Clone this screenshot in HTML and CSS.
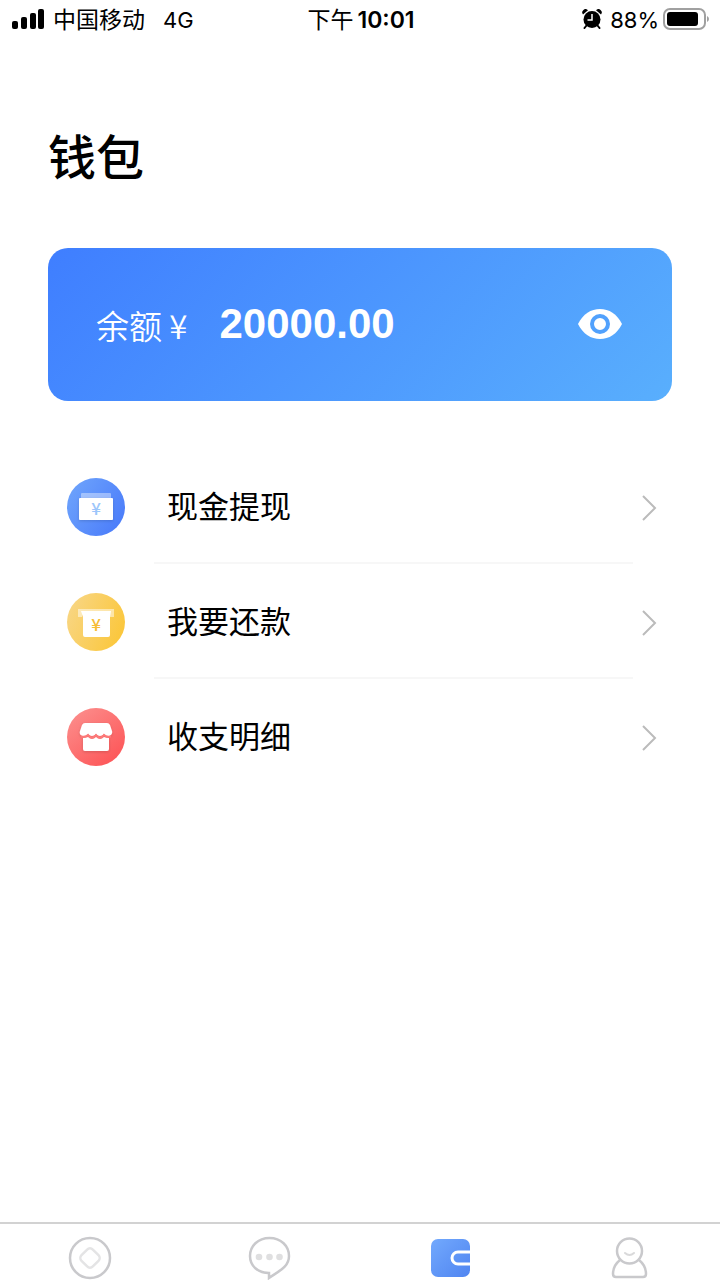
FILE: index.html
```
<!DOCTYPE html>
<html lang="zh-CN">
<head>
    <meta charset="UTF-8">
    <meta name="viewport" content="width=device-width, initial-scale=1.0">
    <title>钱包</title>
    <link rel="stylesheet" href="styles.css">
</head>
<body>
    <!-- Status bar -->
    <header class="status-bar">
        <div class="status-left">
            <svg class="signal" width="33" height="20" viewBox="0 0 33 20" aria-hidden="true">
                <rect x="0" y="12" width="6" height="8" rx="2"/>
                <rect x="9" y="8" width="6" height="12" rx="2"/>
                <rect x="18" y="4" width="6" height="16" rx="2"/>
                <rect x="26" y="0" width="6" height="20" rx="2"/>
            </svg>
            <span class="carrier">中国移动</span>
            <span class="network">4G</span>
        </div>
        <div class="status-time">下午<b>10:01</b></div>
        <div class="status-right">
            <svg width="20" height="20" viewBox="0 0 20 20" aria-hidden="true">
                <path d="M1 5.500A3.300 3.300 0 0 1 6 1.200zM19 5.500A3.300 3.300 0 0 0 14 1.200z"/>
                <circle cx="10" cy="10.500" r="8.500"/>
                <path d="M4.500 16.500L2.500 19M15.500 16.500L17.500 19" stroke="#000" stroke-width="2" stroke-linecap="round"/>
                <path d="M10 5v6H5.500" fill="none" stroke="#fff" stroke-width="1.500"/>
            </svg>
            <span class="percent">88%</span>
            <svg width="47" height="22" viewBox="0 0 47 22" aria-hidden="true">
                <rect x="1" y="1" width="41" height="20" rx="6" fill="none" stroke="#a0a0a0" stroke-width="2"/>
                <rect x="4" y="4" width="31" height="14" rx="3"/>
                <path d="M44 8q2 1 2 3t-2 3z" fill="#a0a0a0"/>
            </svg>
        </div>
    </header>

    <main class="wallet">
        <h1>钱包</h1>

        <!-- Balance -->
        <section class="balance">
            <span class="balance-label">余额 ¥</span>
            <strong class="balance-amount">20000.00</strong>
            <button class="eye" type="button" aria-label="显示余额">
                <svg width="44" height="32" viewBox="0 0 44 32" aria-hidden="true">
                    <path d="M0 16C5 6 13 1 22 1s17 5 22 15c-5 10-13 15-22 15S5 26 0 16z" fill="#fff"/>
                    <circle cx="22" cy="16" r="8" fill="#fff" stroke="#51a1fd" stroke-width="4"/>
                </svg>
            </button>
        </section>

        <!-- Menu -->
        <nav class="menu">
            <a class="menu-item" href="#withdraw">
                <svg class="menu-icon" width="58" height="58" viewBox="0 0 58 58" aria-hidden="true">
                    <defs>
                        <linearGradient id="blue" x1="0" y1="0" x2="1" y2="0.600">
                            <stop offset="0" stop-color="#70a6fc"/>
                            <stop offset="1" stop-color="#4d7ffa"/>
                        </linearGradient>
                        <filter id="shadow" x="-20%" y="-20%" width="140%" height="150%">
                            <feDropShadow dx="0" dy="1" stdDeviation="1.500" flood-color="#000" flood-opacity="0.150"/>
                        </filter>
                    </defs>
                    <circle cx="29" cy="29" r="29" fill="url(#blue)"/>
                    <rect x="14" y="15" width="30" height="7" rx="1" fill="#fff" opacity="0.400"/>
                    <rect x="12" y="20" width="34" height="22" rx="1" fill="#fff" filter="url(#shadow)"/>
                    <text class="yen" x="29" y="37" fill="#9cc6fb">¥</text>
                </svg>
                <span class="menu-text">现金提现</span>
                <svg class="arrow" width="18" height="28" viewBox="0 0 18 28" aria-hidden="true"><path d="M3 3l12 12L3 27"/></svg>
            </a>
            <a class="menu-item" href="#repay">
                <svg class="menu-icon" width="58" height="58" viewBox="0 0 58 58" aria-hidden="true">
                    <defs>
                        <linearGradient id="yellow" x1="0" y1="0.200" x2="1" y2="0.600">
                            <stop offset="0" stop-color="#f8d685"/>
                            <stop offset="1" stop-color="#fbc73c"/>
                        </linearGradient>
                    </defs>
                    <circle cx="29" cy="29" r="29" fill="url(#yellow)"/>
                    <path d="M11 16h36v8h-4v-5H15v5h-4z" fill="#fff" opacity="0.500"/>
                    <path d="M14 18h30l-1 6v18q0 2-2 2H18q-2 0-2-2V24z" fill="#fff"/>
                    <text class="yen" x="29" y="38" fill="#f6bd36">¥</text>
                </svg>
                <span class="menu-text">我要还款</span>
                <svg class="arrow" width="18" height="28" viewBox="0 0 18 28" aria-hidden="true"><path d="M3 3l12 12L3 27"/></svg>
            </a>
            <a class="menu-item" href="#records">
                <svg class="menu-icon" width="58" height="58" viewBox="0 0 58 58" aria-hidden="true">
                    <defs>
                        <linearGradient id="red" x1="0" y1="0" x2="0.800" y2="1">
                            <stop offset="0" stop-color="#fc9290"/>
                            <stop offset="1" stop-color="#fd5557"/>
                        </linearGradient>
                    </defs>
                    <circle cx="29" cy="29" r="29" fill="url(#red)"/>
                    <g fill="#fff" filter="url(#shadow)">
                        <path d="M18 15h22q2 0 3 2l2 6c1 3-2 5-4 5q-3 0-4-2-2 2-4 2t-4-2q-2 2-4 2t-4-2q-1 2-4 2c-3 0-5-2-4-5l2-6q1-2 3-2z"/>
                        <path d="M16 30q3 0 5-1 2 2 4 2t4-2q2 2 4 2t4-2q2 1 5 1v11q0 2-2 2H18q-2 0-2-2z"/>
                    </g>
                    <path d="M14 28.500q4 1 7-1.500 2 2.500 4 2.500t4-2.500q2 2.500 4 2.500t4-2.500q3 2.500 7 1.500" fill="none" stroke="#fd7a79" stroke-width="2"/>
                </svg>
                <span class="menu-text">收支明细</span>
                <svg class="arrow" width="18" height="28" viewBox="0 0 18 28" aria-hidden="true"><path d="M3 3l12 12L3 27"/></svg>
            </a>
        </nav>
    </main>

    <!-- Bottom tabs -->
    <nav class="tab-bar">
        <a href="#home" aria-label="首页">
            <svg width="44" height="44" viewBox="0 0 44 44" fill="none" aria-hidden="true">
                <circle cx="22" cy="22" r="20" stroke="#c9c9cc" stroke-width="2.500"/>
                <rect x="14" y="14" width="16" height="16" rx="4" transform="rotate(45 22 22)" stroke="#e4e4e5" stroke-width="2.500"/>
            </svg>
        </a>
        <a href="#messages" aria-label="消息">
            <svg width="44" height="44" viewBox="0 0 44 44" fill="none" aria-hidden="true">
                <path d="M21 37C10 37 2 30 2 20S10 2 21.500 2 41 10 41 20c0 11-10 15-20 22z" stroke="#c9c9cc" stroke-width="2.500"/>
                <g fill="#dfdfe0">
                    <circle cx="11" cy="21" r="3.300"/>
                    <circle cx="21.500" cy="21" r="3.300"/>
                    <circle cx="31.500" cy="21" r="3.300"/>
                </g>
            </svg>
        </a>
        <a href="#wallet" aria-label="钱包" aria-current="page">
            <svg width="44" height="44" viewBox="0 0 44 44" fill="none" aria-hidden="true">
                <defs>
                    <linearGradient id="tab" x1="0" y1="0" x2="1" y2="1">
                        <stop offset="0" stop-color="#72a9fd"/>
                        <stop offset="1" stop-color="#5085f1"/>
                    </linearGradient>
                </defs>
                <rect x="3" y="3" width="39" height="38" rx="7" fill="url(#tab)"/>
                <path d="M42 16H30a6 6 0 0 0 0 12h12" stroke="#fff" stroke-width="3"/>
            </svg>
        </a>
        <a href="#mine" aria-label="我的">
            <svg width="44" height="44" viewBox="0 0 44 44" fill="none" aria-hidden="true">
                <circle cx="21.500" cy="15" r="12.500" stroke="#c9c9cc" stroke-width="2.500"/>
                <path d="M12 24C7 28 5 34 5 38q0 3 3 3h27q3 0 3-3c0-4-2-10-7-14" stroke="#c9c9cc" stroke-width="2.500"/>
                <path d="M17 17q4.500 4 9 0" stroke="#d9d9da" stroke-width="2" stroke-linecap="round"/>
            </svg>
        </a>
    </nav>
</body>
</html>
```

FILE: styles.css
```
* {
    box-sizing: border-box;
}
body {
    display: flex;
    flex-direction: column;
    min-height: 100vh;
    margin: 0;
    background-color: #fff;
    color: #000;
    font-family: Inter, "Noto Sans CJK SC", sans-serif;
}
svg {
    display: block;
    flex: none;
}
a {
    color: inherit;
    text-decoration: none;
}

/* Status bar */
.status-bar {
    display: grid;
    grid-template-columns: 1fr auto 1fr;
    align-items: center;
    height: 40px;
    padding: 0 10px 0 12px;
    font-size: 23px;
    line-height: 32px;
}
.status-bar svg {
    margin-bottom: 2px;
}
.status-left, .status-right {
    display: flex;
    align-items: center;
}
.carrier {
    margin-left: 8px;
}
.network {
    margin-left: 18px;
    font-size: 22px;
}
.status-time b {
    margin-left: 4px;
    font-weight: 600;
}
.status-right {
    justify-content: flex-end;
}
.percent {
    margin: 0 4px 0 8px;
    font-size: 22px;
}

/* Page content */
.wallet {
    flex: 1;
    padding: 80px 48px 0;
}
h1 {
    margin: 0 0 52px;
    font-size: 48px;
    font-weight: 500;
    line-height: 76px;
}
.balance {
    display: flex;
    align-items: center;
    padding: 43px 50px 45px 48px;
    border-radius: 20px;
    background: linear-gradient(135deg, #3f7eff, #59affd);
    color: #fff;
    line-height: 65px;
}
.balance-label {
    padding-top: 4px;
    font-family: "Noto Sans CJK SC", sans-serif;
    font-size: 33px;
    font-weight: 350;
    line-height: 61px;
}
.balance-amount {
    margin-left: 32px;
    font-family: "Liberation Sans", Arial, sans-serif;
    font-size: 42px;
}
.eye {
    margin-left: auto;
    padding: 0;
    border: 0;
    background: none;
    cursor: pointer;
}

/* Menu list */
.menu {
    margin-top: 48px;
}
.menu-item {
    display: grid;
    grid-template-columns: 58px 1fr 18px;
    align-items: center;
    height: 115px;
    padding: 0 14px 0 19px;
    font-size: 31px;
    background: linear-gradient(#f7f7f7, #f7f7f7) no-repeat 106px 100% / calc(100% - 145px) 2px;
}
.menu-item:last-child {
    background: none;
}
.menu-text {
    margin-left: 42px;
    padding-bottom: 4px;
}
.yen {
    font-family: "Noto Sans CJK SC", sans-serif;
    font-size: 17px;
    font-weight: 500;
    text-anchor: middle;
}
.arrow {
    fill: none;
    stroke: #bbb;
    stroke-width: 2;
}

/* Bottom tabs */
.tab-bar {
    display: grid;
    grid-template-columns: repeat(4, 1fr);
    justify-items: center;
    height: 58px;
    padding-top: 12px;
    border-top: 2px solid #d2d2d2;
}
```
